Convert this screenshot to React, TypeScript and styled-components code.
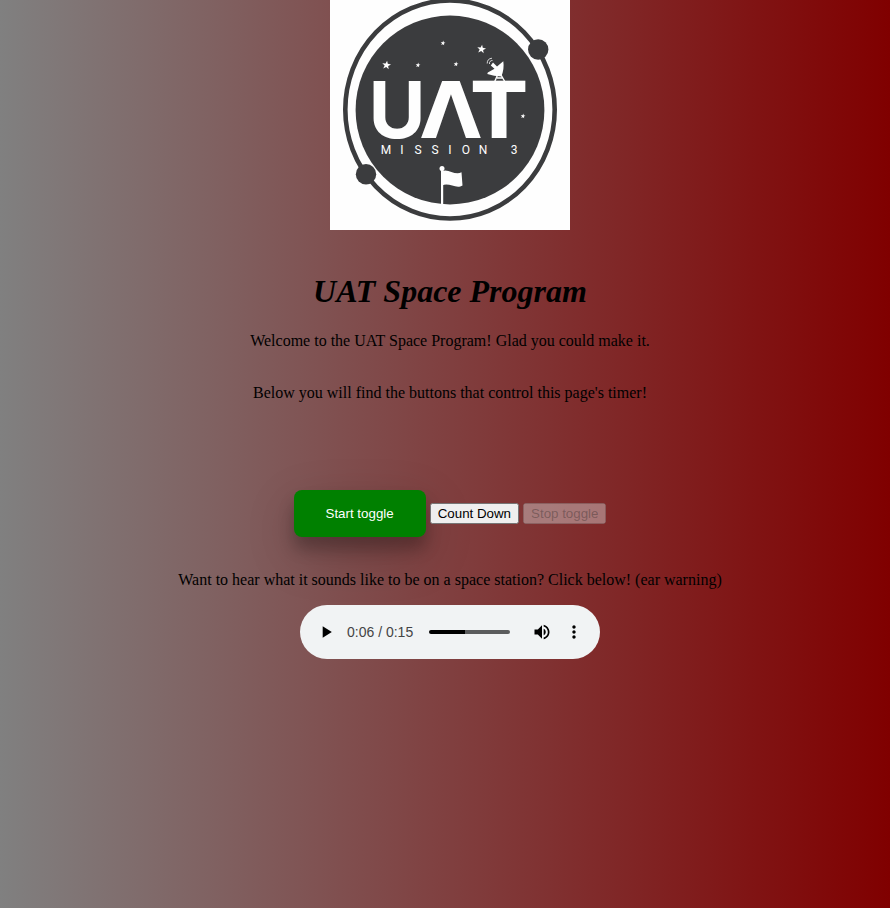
import React, { useState } from "react";
import styled, { createGlobalStyle } from "styled-components";

const GlobalStyle = createGlobalStyle`
  body {
    margin: 0;
    min-height: 100vh;
    background: linear-gradient(to right, gray, maroon);
    font-family: "Liberation Serif", "Times New Roman", serif;
    font-size: 16px;
    line-height: 18px;
    color: #000;
  }
`;

const Page = styled.main`
  display: flex;
  flex-direction: column;
  align-items: center;
  padding-left: 10px;
  text-align: center;
`;

const Logo = styled.svg`
  display: block;
  width: 240px;
  height: 230px;
  background: #fefefe;
`;

const LogoLetters = styled.text<{ $wide?: boolean }>`
  font-family: ${(p) => (p.$wide ? '"DejaVu Sans"' : "Inter")}, sans-serif;
  font-size: 78px;
  font-weight: 700;
  text-anchor: middle;
`;

const LogoCaption = styled.text`
  font-family: Roboto, sans-serif;
  font-size: 12px;
  text-anchor: middle;
`;

const Title = styled.h1`
  margin: 43px 0 22px;
  font-size: 32px;
  line-height: 37px;
  font-style: italic;
`;

const Text = styled.p`
  margin: 0 0 34px;
`;

const Prompt = styled.p`
  margin: 34px 0 16px;
`;

const Controls = styled.div`
  display: flex;
  align-items: center;
  gap: 4px;
  margin-top: 54px;
`;

const TimerButton = styled.button`
  font-family: "Liberation Sans", Arial, sans-serif;
`;

const StartButton = styled(TimerButton)`
  padding: 16px 32px;
  border: 0;
  border-radius: 8px;
  background: green;
  color: #fff;
  box-shadow: 0 12px 16px rgba(0, 0, 0, 0.24), 0 17px 50px rgba(0, 0, 0, 0.19);
`;

const Player = styled.div`
  display: flex;
  align-items: center;
  box-sizing: border-box;
  width: 300px;
  max-width: 100%;
  height: 54px;
  padding: 0 10px;
  border-radius: 27px;
  background: #f1f3f4;
  font-family: "Liberation Sans", Arial, sans-serif;
  font-size: 14px;
  color: #444;
`;

const IconButton = styled.button`
  display: flex;
  align-items: center;
  justify-content: center;
  flex: none;
  width: 32px;
  height: 32px;
  padding: 0;
  border: 0;
  background: none;
  color: #000;

  svg {
    width: 20px;
    height: 20px;
    fill: currentColor;
  }
`;

const Time = styled.span`
  margin: 0 16px 0 5px;
  white-space: nowrap;
`;

const Seek = styled.input<{ $progress: number }>`
  appearance: none;
  flex: 1;
  min-width: 0;
  height: 4px;
  margin: 0 16px 0 0;
  border-radius: 2px;
  background: linear-gradient(
    to right,
    #000 ${(p) => p.$progress}%,
    #5b5c5d ${(p) => p.$progress}%
  );

  &::-webkit-slider-thumb {
    appearance: none;
    width: 4px;
    height: 4px;
    background: transparent;
  }
`;

const starPath =
  "M0-4 1-1.2 4-1.1 1.6.7 2.5 3.6 0 1.9-2.5 3.6-1.6.7-4-1.1-1-1.2Z";

const stars = [
  { x: 386.5, y: 65, size: 1.1 },
  { x: 481.5, y: 49, size: 1.1 },
  { x: 443, y: 43, size: 0.6 },
  { x: 418, y: 65, size: 0.6 },
  { x: 456, y: 64, size: 0.6 },
  { x: 523, y: 116, size: 0.6 },
];

function MissionLogo() {
  return (
    <Logo viewBox="330 0 240 230" role="img" aria-label="UAT Mission 3">
      <ellipse cx="450" cy="109.5" rx="104.7" ry="109" fill="none" stroke="#3b3c3e" strokeWidth="4.6" />
      <circle cx="450" cy="110" r="94.4" fill="#3b3c3e" />
      <circle cx="538.2" cy="49.5" r="10.2" fill="#3b3c3e" />
      <circle cx="366" cy="174.3" r="10.2" fill="#3b3c3e" />
      <g fill="#fefefe">
        {stars.map((s) => (
          <path key={`${s.x}-${s.y}`} d={starPath} transform={`translate(${s.x} ${s.y}) scale(${s.size}) rotate(8)`} />
        ))}
        <LogoLetters x="397" y="138">U</LogoLetters>
        <LogoLetters $wide x="451" y="138">Λ</LogoLetters>
        <LogoLetters $wide x="499" y="138">T</LogoLetters>
        <LogoCaption y="154">
          <tspan x="386">M</tspan>
          <tspan x="402">I</tspan>
          <tspan x="418">S</tspan>
          <tspan x="435">S</tspan>
          <tspan x="450">I</tspan>
          <tspan x="466">O</tspan>
          <tspan x="483">N</tspan>
          <tspan x="514">3</tspan>
        </LogoCaption>
        <path d="M503.300 61.300Q504.500 69 501.300 76.500Q494 76 487.300 74L487.800 72.500L494.500 68.800L490.800 65.500L493 62.500L497 66.500Z" />
        <path d="M498 74 494.500 82M500.500 74 505 82M497 78H503" fill="none" stroke="#fefefe" strokeWidth="1.4" />
        <path d="M489.500 64A2.800 2.800 0 0 1 492.500 60.500M487.200 63.500A5.300 5.300 0 0 1 492 58.200" fill="none" stroke="#fefefe" strokeWidth=".8" />
        <circle cx="442" cy="168.500" r="2.500" />
        <rect x="441" y="169" width="2.200" height="36" />
        <path d="M442 171.300C448 168 455 176 461.500 172.300L462.500 185.500C456 189.500 449 182 442 185.500Z" />
      </g>
    </Logo>
  );
}

const DURATION = 15;

const clock = (seconds: number) => `0:${String(seconds).padStart(2, "0")}`;

function AudioPlayer() {
  const [position, setPosition] = useState(6);
  return (
    <Player role="group" aria-label="Space station audio">
      <IconButton type="button" aria-label="Play">
        <svg viewBox="0 0 24 24"><path d="M8 5v14l11-7z" /></svg>
      </IconButton>
      <Time>{clock(position)} / {clock(DURATION)}</Time>
      <Seek
        type="range"
        aria-label="Seek"
        min={0}
        max={DURATION}
        value={position}
        $progress={(position / DURATION) * 100 + 5}
        onChange={(e) => setPosition(Number(e.target.value))}
      />
      <IconButton type="button" aria-label="Mute">
        <svg viewBox="0 0 24 24">
          <path d="M3 9v6h4l5 5V4L7 9H3zm13.500 3c0-1.770-1.020-3.290-2.500-4.030v8.050c1.480-.730 2.500-2.250 2.500-4.020zM14 3.230v2.060c2.890.860 5 3.540 5 6.710s-2.110 5.850-5 6.710v2.060c4.010-.910 7-4.490 7-8.770s-2.990-7.860-7-8.770z" />
        </svg>
      </IconButton>
      <IconButton type="button" aria-label="More options">
        <svg viewBox="0 0 24 24">
          <path d="M12 8c1.100 0 2-.900 2-2s-.900-2-2-2-2 .900-2 2 .900 2 2 2zm0 2c-1.100 0-2 .900-2 2s.900 2 2 2 2-.900 2-2-.900-2-2-2zm0 6c-1.100 0-2 .900-2 2s.900 2 2 2 2-.900 2-2-.900-2-2-2z" />
        </svg>
      </IconButton>
    </Player>
  );
}

export default function App() {
  return (
    <>
      <GlobalStyle />
      <Page>
        <MissionLogo />
        <Title>UAT Space Program</Title>
        <Text>Welcome to the UAT Space Program! Glad you could make it.</Text>
        <Text>Below you will find the buttons that control this page's timer!</Text>
        <Controls>
          <StartButton type="button">Start toggle</StartButton>
          <TimerButton type="button">Count Down</TimerButton>
          <TimerButton type="button" disabled>Stop toggle</TimerButton>
        </Controls>
        <Prompt>Want to hear what it sounds like to be on a space station? Click below! (ear warning)</Prompt>
        <AudioPlayer />
      </Page>
    </>
  );
}
